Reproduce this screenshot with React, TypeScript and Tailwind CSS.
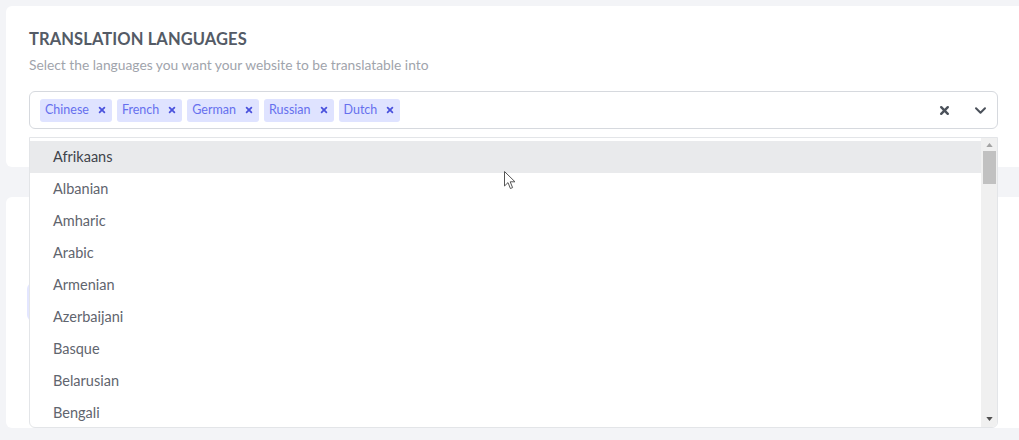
import React from "react";

const tags = ["Chinese", "French", "German", "Russian", "Dutch"];
const options = [
  "Afrikaans",
  "Albanian",
  "Amharic",
  "Arabic",
  "Armenian",
  "Azerbaijani",
  "Basque",
  "Belarusian",
  "Bengali",
];

function SmallX({ className }: { className?: string }) {
  return (
    <svg viewBox="0 0 10 10" className={className} fill="none" stroke="currentColor" strokeWidth="2.2" strokeLinecap="round">
      <path d="M2 2 L8 8 M8 2 L2 8" />
    </svg>
  );
}

export default function App() {
  return (
    <div
      className="relative h-[440px] overflow-hidden bg-[#f3f4f7] pl-[6px] pt-[6px]"
      style={{ fontFamily: "Lato, 'Open Sans', sans-serif" }}
    >
      {/* Card 1 */}
      <div className="h-[161px] rounded-l-md bg-white pl-[23px] pr-[21px] pt-[23px]">
        <h2 className="text-[16.5px] font-bold leading-[20px] tracking-[0.1px] text-[#545b66]">
          TRANSLATION LANGUAGES
        </h2>
        <p className="mt-[6px] text-[13.8px] leading-[20px] text-[#9fa4ac]">
          Select the languages you want your website to be translatable into
        </p>
        <div className="relative mt-[16px]">
          <div className="flex h-[38px] items-center rounded-md border border-[#d6d9de] bg-white pl-[10px] pr-[10px]">
            <div className="flex flex-1 items-center gap-[5px]">
              {tags.map((t) => (
                <div
                  key={t}
                  className="flex h-[23px] items-center gap-[9px] rounded-[3px] bg-[#dfe3ff] pl-[5px] pr-[6px] text-[12.5px] text-[#6670ee]"
                >
                  <span>{t}</span>
                  <SmallX className="h-[8px] w-[8px] text-[#4a52dd]" />
                </div>
              ))}
            </div>
            <SmallX className="mr-[24px] h-[11px] w-[11px] text-[#4b515a]" />
            <svg viewBox="0 0 14 10" className="h-[9px] w-[13px] text-[#4b515a]" fill="none" stroke="currentColor" strokeWidth="2.2" strokeLinecap="round" strokeLinejoin="round">
              <path d="M2 2.5 L7 7.5 L12 2.5" />
            </svg>
          </div>

          {/* Dropdown menu */}
          <div className="absolute left-0 right-0 top-full z-10 mt-[8px] flex h-[291px] overflow-hidden rounded-b-md border border-[#e3e5e8] bg-white">
            <div className="flex-1 pt-[3px]">
              {options.map((o, i) => (
                <div
                  key={o}
                  className={`flex h-[32px] items-center pl-[23px] text-[14.5px] ${
                    i === 0 ? "bg-[#e9eaec] text-[#3f444b]" : "text-[#5f656e]"
                  }`}
                >
                  {o}
                </div>
              ))}
            </div>
            <div className="flex w-[16px] flex-col items-center bg-[#f0f0f0]">
              <svg viewBox="0 0 8 5" className="mt-[5px] h-[4px] w-[7px]" fill="#a3a3a3">
                <path d="M0 5 L4 0 L8 5 Z" />
              </svg>
              <div className="mt-[4px] h-[33px] w-[13px] bg-[#c1c1c1]" />
              <div className="flex-1" />
              <svg viewBox="0 0 8 5" className="mb-[6px] h-[4px] w-[7px]" fill="#505050">
                <path d="M0 0 L8 0 L4 5 Z" />
              </svg>
            </div>
          </div>
        </div>
      </div>

      {/* Card 2 (mostly covered) */}
      <div className="mt-[30px] h-[231px] rounded-l-md bg-white pl-[21px] pt-[86px]">
        <div className="h-[38px] w-[120px] rounded-md bg-[#e3e6ff]" />
      </div>

      {/* mouse cursor */}
      <svg
        viewBox="0 0 12 19"
        className="absolute left-[504px] top-[171px] z-20 h-[19px] w-[12px]"
      >
        <path
          d="M0.5 0.5 L0.5 15 L4 11.6 L6.4 17.5 L8.6 16.6 L6.2 10.8 L11 10.8 Z"
          fill="white"
          stroke="#555"
          strokeWidth="1"
          strokeLinejoin="round"
        />
      </svg>
    </div>
  );
}
